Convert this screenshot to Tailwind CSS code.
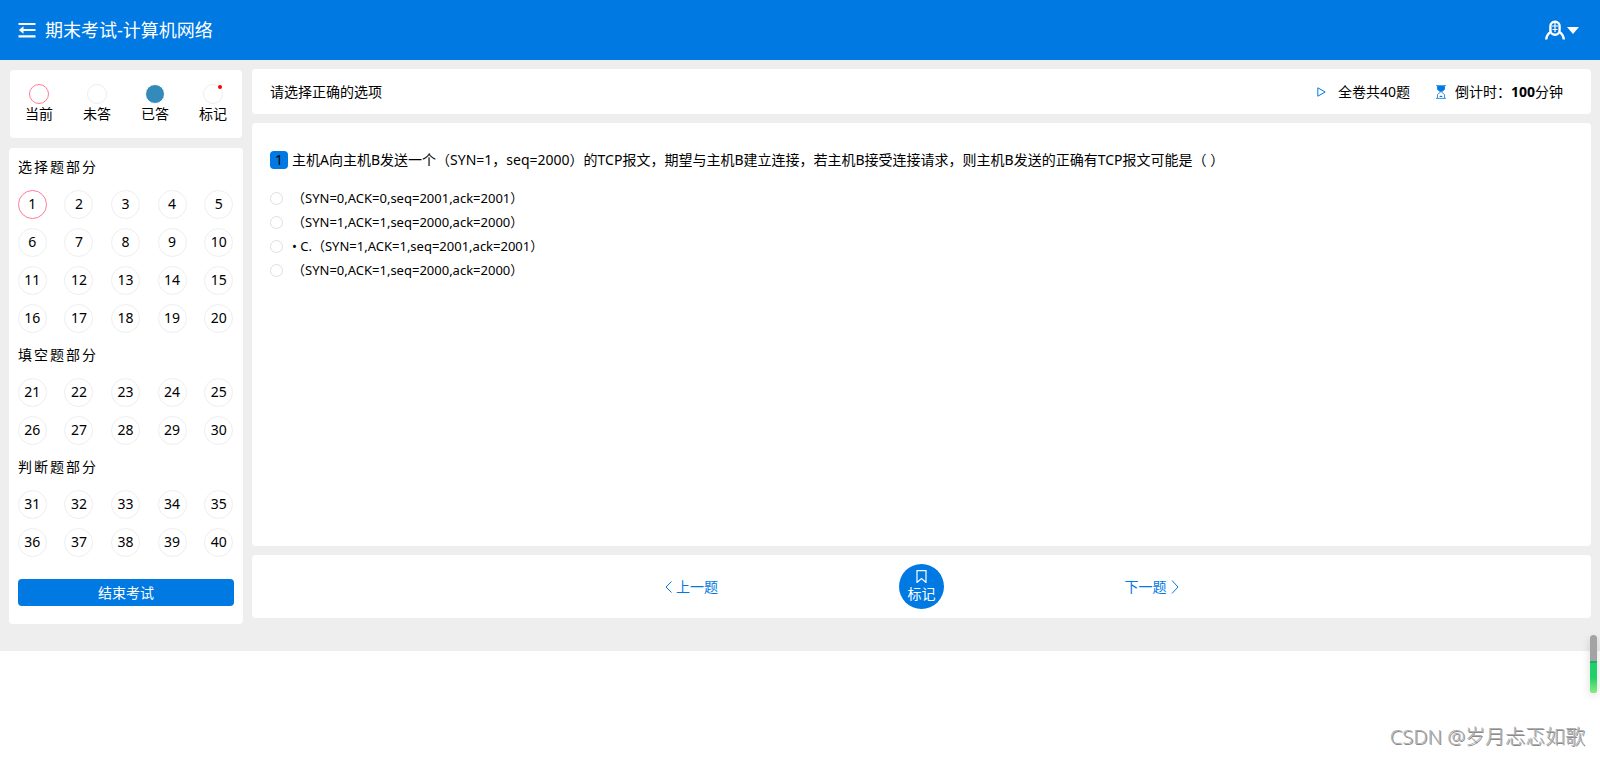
<!DOCTYPE html>
<html lang="zh-CN">
<head>
<meta charset="utf-8">
<title>期末考试-计算机网络</title>
<script src="https://cdn.jsdelivr.net/npm/@tailwindcss/browser@4"></script>
</head>
<body class="relative min-h-screen bg-white font-['Noto_Sans','Noto_Sans_CJK_SC',sans-serif] text-sm text-black">
<header class="flex h-[60px] items-center justify-between bg-[#0079e3] pr-[21px] pl-[18px] text-white">
  <div class="flex items-center gap-[9px]">
    <button aria-label="收起菜单">
      <svg class="block h-4 w-[18px]" viewBox="0 0 18 16" fill="none" stroke="currentColor" stroke-width="2.200"><path d="M.5 2H17.500M4 8h13.500M.5 14.300H17.500"/><path d="M.8 8L5.500 4.300V11.700z" fill="currentColor" stroke="none"/></svg>
    </button>
    <h1 class="text-lg leading-6">期末考试-计算机网络</h1>
  </div>
  <button class="flex items-center gap-[2px]" aria-label="用户菜单">
    <svg class="block h-5 w-5" viewBox="0 0 20 20" fill="none" stroke="currentColor" stroke-width="2.400"><path d="M1.200 19.500c.3-3.500 2-6 4.500-7.500M18.800 19.500c-.3-3.500-2-6-4.500-7.500"/><rect x="5.400" y="1.800" width="9.200" height="13" rx="4.500"/><path d="M7 6h6M7.500 9.500h5M10 3v9" stroke-width="1.200"/></svg>
    <svg class="block h-[7px] w-3" viewBox="0 0 12 7" fill="currentColor"><path d="M0 0h12L6 7z"/></svg>
  </button>
</header>

<div class="flex items-start gap-[9px] bg-[#eeeeee] pt-[9px] pr-[9px] pb-[27px] pl-[9px]">
  <aside class="w-[234px] shrink-0 pt-px">
    <ul class="mx-px grid h-[68px] grid-cols-4 rounded bg-white pt-[14px] text-center leading-5">
      <li class="flex flex-col items-center"><span class="size-5 rounded-full border border-[#ff7a99]"></span>当前</li>
      <li class="flex flex-col items-center"><span class="size-5 rounded-full border border-[#eeeeee]"></span>未答</li>
      <li class="flex flex-col items-center"><span class="size-5 rounded-full border border-white bg-[#338bb9]"></span>已答</li>
      <li class="flex flex-col items-center"><span class="relative size-5 rounded-full border border-[#eeeeee]"><i class="absolute top-0 right-0 size-1 rounded-full bg-[#ff0000]"></i></span>标记</li>
    </ul>
    <nav id="nav" class="mt-[10px] rounded bg-white pt-px pb-[18px]" aria-label="题目导航">
      <button class="mx-[9px] mt-[18px] block h-[27px] w-[216px] rounded bg-[#0079e3] text-white">结束考试</button>
    </nav>
  </aside>

  <main class="flex min-w-0 flex-1 flex-col gap-[9px]">
    <section class="flex h-[45px] items-center justify-between rounded-sm bg-white pr-7 pl-[18px]">
      <h2>请选择正确的选项</h2>
      <div class="flex items-center">
        <svg class="block h-[10px] w-[9px]" viewBox="0 0 9 10" fill="none" stroke="#0079e3"><path d="M.8 .8v8.400L8.200 5z"/></svg>
        <span class="ml-3">全卷共40题</span>
        <svg class="ml-[26px] block h-[14px] w-[10px]" viewBox="0 0 10 14" fill="none" stroke="#0079e3"><path d="M0 .6h10M0 13.400h10M1.500 1v3.500L4.500 7L1.500 9.500V13M8.500 1v3.500L5.500 7L8.500 9.500V13" stroke-width=".8"/><path d="M1.500 1h7v3.500L5 7L1.500 4.500zM3 12l2-1.500L7 12z" fill="#0079e3" stroke="none"/></svg>
        <span class="ml-[9px]">倒计时：<b>100</b>分钟</span>
      </div>
    </section>

    <section class="min-h-[423px] rounded-sm bg-white px-[18px] pt-[27px]">
      <p class="flex items-center gap-1 leading-5"><span class="size-[18px] shrink-0 rounded bg-[#0079e3] text-center leading-[18px]">1</span><span>主机A向主机B发送一个（SYN=1，seq=2000）的TCP报文，期望与主机B建立连接，若主机B接受连接请求，则主机B发送的正确有TCP报文可能是（ ）</span></p>
      <div class="mt-[17px] grid auto-rows-[23px] gap-px text-[13px]">
        <label class="flex items-center gap-[9px]"><input type="radio" name="a" class="size-[13px] appearance-none rounded-full border border-[#dcdfe6] checked:bg-[#0079e3]"><span>（SYN=0,ACK=0,seq=2001,ack=2001）</span></label>
        <label class="flex items-center gap-[9px]"><input type="radio" name="a" class="size-[13px] appearance-none rounded-full border border-[#dcdfe6] checked:bg-[#0079e3]"><span>（SYN=1,ACK=1,seq=2000,ack=2000）</span></label>
        <label class="flex items-center gap-[9px]"><input type="radio" name="a" class="size-[13px] appearance-none rounded-full border border-[#dcdfe6] checked:bg-[#0079e3]"><span>• C.（SYN=1,ACK=1,seq=2001,ack=2001）</span></label>
        <label class="flex items-center gap-[9px]"><input type="radio" name="a" class="size-[13px] appearance-none rounded-full border border-[#dcdfe6] checked:bg-[#0079e3]"><span>（SYN=0,ACK=1,seq=2000,ack=2000）</span></label>
      </div>
    </section>

    <section class="grid h-[63px] grid-cols-[230px_230px_230px] place-items-center justify-center rounded bg-white text-[#0079e3]">
      <button class="flex items-center gap-1"><svg class="block h-3 w-[7px]" viewBox="0 0 7 12" fill="none" stroke="currentColor"><path d="M6.500 .5L1 6l5.500 5.500"/></svg>上一题</button>
      <button class="flex size-[45px] flex-col items-center rounded-full bg-[#0079e3] pt-[6px] leading-5 text-white"><svg class="mb-px block h-[13px] w-[11px] shrink-0" viewBox="0 0 11 13" fill="none" stroke="currentColor" stroke-width="1.200"><path d="M1 .6h9v11.800L5.500 8.500L1 12.400z"/></svg><span>标记</span></button>
      <button class="flex items-center gap-1">下一题<svg class="block h-[14px] w-2" viewBox="0 0 8 14" fill="none" stroke="currentColor"><path d="M1 .5L7 7l-6 6.500"/></svg></button>
    </section>
  </main>
</div>

<div class="absolute top-[635px] right-[3px] h-[58px] w-[7px] overflow-hidden rounded-full bg-[#a3a3a3] shadow-[0_3px_8px_rgba(0,0,0,0.15)]">
  <div class="mt-[26px] h-8 border-t-2 border-[#16b35c] bg-linear-to-b from-[#23cf6b] from-50% to-[#7bf07f]"></div>
</div>
<p class="absolute right-[15px] bottom-1 text-xl leading-8 font-light text-[#b0b0b0] [text-shadow:1px_1px_0_#8a8a8a]">CSDN @岁月忐忑如歌</p>

<template id="sec"><div>
  <h3 class="pl-[9px] leading-9 tracking-[2px]"></h3>
  <div class="grid auto-rows-[38px] grid-cols-5 items-center pr-px"></div>
</div></template>
<script>
const nav = document.getElementById('nav'), end = nav.querySelector('button');
for (const [title, from, to] of [['选择题部分', 1, 20], ['填空题部分', 21, 30], ['判断题部分', 31, 40]]) {
  const s = document.getElementById('sec').content.cloneNode(true);
  s.querySelector('h3').textContent = title;
  const grid = s.querySelector('div > div');
  for (let i = from; i <= to; i++) {
    const b = document.createElement('button');
    b.className = i === 1 ? 'mx-auto size-[29px] rounded-full border border-[#ff7a99]' : 'mx-auto size-[29px] rounded-full border border-[#eeeeee]';
    b.textContent = i;
    grid.append(b);
  }
  nav.insertBefore(s, end);
}
</script>
</body>
</html>
